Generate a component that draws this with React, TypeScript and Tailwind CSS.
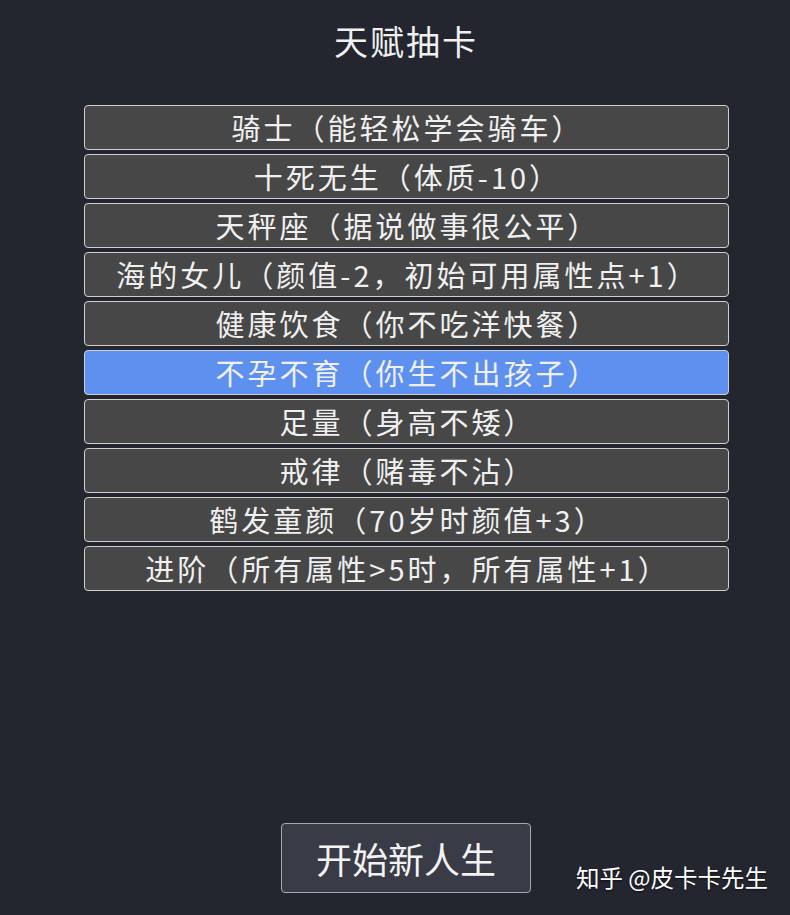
import React, { useState } from "react";

const talents = [
  "骑士（能轻松学会骑车）",
  "十死无生（体质-10）",
  "天秤座（据说做事很公平）",
  "海的女儿（颜值-2，初始可用属性点+1）",
  "健康饮食（你不吃洋快餐）",
  "不孕不育（你生不出孩子）",
  "足量（身高不矮）",
  "戒律（赌毒不沾）",
  "鹤发童颜（70岁时颜值+3）",
  "进阶（所有属性>5时，所有属性+1）",
];

export default function App() {
  const [selected, setSelected] = useState<number[]>([5]);

  const toggle = (i: number) => {
    setSelected(selected.includes(i) ? selected.filter((s) => s !== i) : [...selected, i]);
  };

  return (
    <div
      className="relative w-[790px] h-[915px] pl-[22px] bg-[#23252f] text-[#f0f0f0] flex flex-col items-center"
      style={{ fontFamily: '"Noto Sans CJK SC", "Noto Sans", sans-serif' }}
    >
      {/* 标题 */}
      <h1 className="mt-[18px] text-[34px] leading-[46px] tracking-[2px] font-normal">天赋抽卡</h1>

      {/* 天赋列表 */}
      <ul className="mt-[41px] w-[645px] flex flex-col gap-[4px]">
        {talents.map((t, i) => (
          <li
            key={i}
            onClick={() => toggle(i)}
            className={
              "h-[45px] pl-[3px] rounded-[4px] border border-[#cfcfcf] flex items-center justify-center text-[29px] tracking-[3px] leading-none cursor-pointer " +
              (selected.includes(i) ? "bg-[#5d90ef]" : "bg-[#474747]")
            }
          >
            {t}
          </li>
        ))}
      </ul>

      <div className="flex-1" />

      {/* 开始按钮 */}
      <button className="mb-[22px] w-[250px] h-[70px] rounded-[4px] border border-[#a8a9b0] bg-[#393b47] text-[36px] text-[#f2f2f2]">
        开始新人生
      </button>

      {/* 水印 */}
      <div className="absolute right-[22px] bottom-[20px] text-[23.5px] text-white [text-shadow:0_1px_2px_rgba(0,0,0,0.6)]">
        知乎 @皮卡卡先生
      </div>
    </div>
  );
}
